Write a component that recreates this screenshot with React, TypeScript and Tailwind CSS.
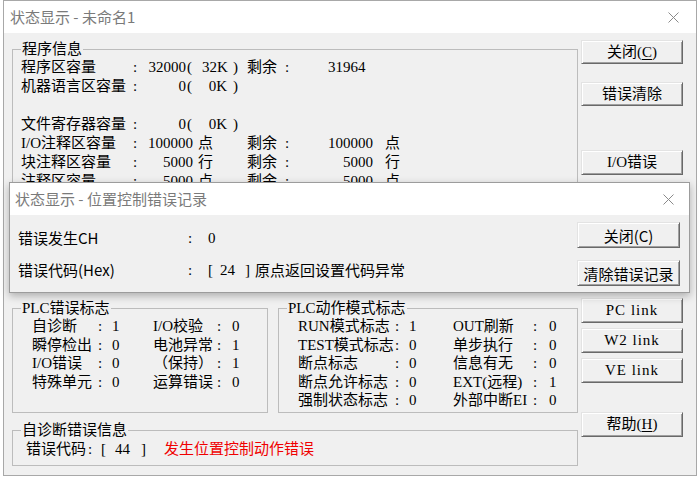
import React from "react"

const serif = "font-['Liberation_Serif','Noto_Sans_CJK_SC',serif]"
const sans = "font-['Noto_Sans_CJK_SC','Liberation_Sans',sans-serif]"

function CloseX() {
  return (
    <svg width="11" height="11" viewBox="0 0 11 11">
      <path d="M0.5 0.5 L10.5 10.5 M10.5 0.5 L0.5 10.5" stroke="#8a8a8a" strokeWidth="1" />
    </svg>
  )
}

function Btn({ children, className = "" }: { children: React.ReactNode; className?: string }) {
  return (
    <div
      className={
        "flex items-center justify-center bg-[#f0f0f0] border border-t-[#e3e3e3] border-l-[#e3e3e3] border-r-[#696969] border-b-[#696969] shadow-[inset_1px_1px_0_#ffffff,inset_-1px_-1px_0_#a0a0a0] text-[15px] leading-none text-black " +
        className
      }
    >
      {children}
    </div>
  )
}

// group box: legend sits on the border, content padded inside
function Group({ title, className = "", inner = "", children }: { title: string; className?: string; inner?: string; children?: React.ReactNode }) {
  return (
    <fieldset className={"border border-[#bcbcbc] min-w-0 " + className}>
      <legend className="ml-[8px] px-[1px] leading-[18px]">{title}</legend>
      <div className={inner}>{children}</div>
    </fieldset>
  )
}

function CapRow({ label, num, k }: { label: string; num: string; k: string }) {
  return (
    <div className="flex h-[19px] items-center whitespace-nowrap">
      <span className="w-[112px]">{label}</span>
      <span className="w-[15px]">:</span>
      <span className="w-[38px] text-right">{num}</span>
      <span className="w-[16px] pl-[1px]">(</span>
      <span className="w-[25px] text-right">{k}</span>
      <span className="w-[20px] pl-[6px]">)</span>
    </div>
  )
}

function CommentRow({ label, num, unit, rest }: { label: string; num: string; unit: string; rest: string }) {
  return (
    <div className="flex h-[19px] items-center whitespace-nowrap">
      <span className="w-[112px]">{label}</span>
      <span className="w-[15px]">:</span>
      <span className="w-[45px] text-right">{num}</span>
      <span className="w-[54px] pl-[5px]">{unit}</span>
      <span className="w-[36px]">剩余</span>
      <span className="w-[37px] pl-[2px]">:</span>
      <span className="w-[53px] text-right">{rest}</span>
      <span className="pl-[12px]">{unit}</span>
    </div>
  )
}

const errFlags: [string, string, string, string][] = [
  ["自诊断", "1", "I/O校验", "0"],
  ["瞬停检出", "0", "电池异常", "1"],
  ["I/O错误", "0", "（保持）", "1"],
  ["特殊单元", "0", "运算错误", "0"],
]

const modeFlags: [string, string, string, string][] = [
  ["RUN模式标志", "1", "OUT刷新", "0"],
  ["TEST模式标志", "0", "单步执行", "0"],
  ["断点标志", "0", "信息有无", "0"],
  ["断点允许标志", "0", "EXT(远程)", "1"],
  ["强制状态标志", "0", "外部中断EI", "0"],
]

export default function App() {
  return (
    <div className="relative w-[700px] h-[478px] bg-white overflow-hidden">
      {/* main window */}
      <div className={"ml-[3px] w-[694px] h-[476px] border border-[#a8a8a8] bg-[#f0f0f0] flex flex-col text-[15px] text-black " + serif}>
        <div className="h-[32px] shrink-0 bg-white flex items-center justify-between">
          <span className={"pl-[6px] text-[15px] text-[#7a7a7a] " + sans}>状态显示 - 未命名1</span>
          <div className="w-[46px] h-full flex items-center justify-center">
            <CloseX />
          </div>
        </div>

        <div className="flex flex-1 pl-[8px] pt-[7px]">
          {/* left column */}
          <div className="w-[566px] flex flex-col">
            <Group title="程序信息" className="h-[250px]" inner="pl-[8px]">
              <div className="flex h-[19px] items-center whitespace-nowrap">
                <span className="w-[112px]">程序区容量</span>
                <span className="w-[15px]">:</span>
                <span className="w-[38px] text-right">32000</span>
                <span className="w-[16px] pl-[1px]">(</span>
                <span className="w-[25px] text-right">32K</span>
                <span className="w-[20px] pl-[6px]">)</span>
                <span className="w-[36px]">剩余</span>
                <span className="w-[45px] pl-[2px]">:</span>
                <span>31964</span>
              </div>
              <CapRow label="机器语言区容量" num="0" k="0K" />
              <div className="h-[19px]" />
              <CapRow label="文件寄存器容量" num="0" k="0K" />
              <CommentRow label="I/O注释区容量" num="100000" unit="点" rest="100000" />
              <CommentRow label="块注释区容量" num="5000" unit="行" rest="5000" />
              <CommentRow label="注释区容量" num="5000" unit="点" rest="5000" />
            </Group>

            <div className="flex mt-[9px] gap-[10px]">
              <Group title="PLC错误标志" className="w-[256px] h-[114px]" inner="pl-[19px]">
                {errFlags.map(([a, av, b, bv]) => (
                  <div key={a} className="flex h-[18.5px] items-center whitespace-nowrap">
                    <span className="w-[60px]">{a}</span>
                    <span className="w-[16px] text-center">:</span>
                    <span className="w-[45px] pl-[4px]">{av}</span>
                    <span className="w-[60px]">{b}</span>
                    <span className="w-[12px] text-center">:</span>
                    <span className="pl-[7px]">{bv}</span>
                  </div>
                ))}
              </Group>
              <Group title="PLC动作模式标志" className="w-[300px] h-[114px]" inner="pl-[19px]">
                {modeFlags.map(([a, av, b, bv]) => (
                  <div key={a} className="flex h-[18.5px] items-center whitespace-nowrap">
                    <span className="w-[92px]">{a}</span>
                    <span className="w-[14px] text-center">:</span>
                    <span className="w-[49px] pl-[5px]">{av}</span>
                    <span className="w-[75px]">{b}</span>
                    <span className="w-[14px] text-center">:</span>
                    <span className="pl-[7px]">{bv}</span>
                  </div>
                ))}
              </Group>
            </div>

            <Group title="自诊断错误信息" className="mt-[8px] h-[45px]" inner="pl-[13px]">
              <div className="flex h-[20px] items-center whitespace-nowrap">
                <span className="w-[62px]">错误代码</span>
                <span className="w-[13px]">:</span>
                <span className="w-[14px]">[</span>
                <span className="w-[26px]">44</span>
                <span className="w-[23px]">]</span>
                <span className="text-[#f00000]">发生位置控制动作错误</span>
              </div>
            </Group>
          </div>

          {/* right buttons */}
          <div className="ml-[3px] w-[102px] flex flex-col">
            <Btn className="mt-0 h-[24px]">
              关闭(<u className="underline-offset-2">C</u>)
            </Btn>
            <Btn className="mt-[18px] h-[24px]">错误清除</Btn>
            <Btn className="mt-[44px] h-[25px]">I/O错误</Btn>
            <div className="h-[123px]" />
            <Btn className="h-[25px] tracking-[1px]">PC link</Btn>
            <Btn className="mt-[5px] h-[25px] tracking-[1px]">W2 link</Btn>
            <Btn className="mt-[5px] h-[25px] tracking-[1px]">VE link</Btn>
            <Btn className="mt-[29px] h-[25px]">
              帮助(<u className="underline-offset-2">H</u>)
            </Btn>
          </div>
        </div>
      </div>

      {/* overlaid dialog */}
      <div className="absolute left-[9px] top-[182px] w-[681px] h-[111px] border border-[#9c9c9c] bg-[#f0f0f0] flex flex-col shadow-[0_3px_8px_rgba(0,0,0,0.28)] text-[15px] text-black">
        <div className="h-[32px] shrink-0 bg-white flex items-center justify-between">
          <span className={"pl-[5px] text-[15px] text-[#7a7a7a] " + sans}>状态显示 - 位置控制错误记录</span>
          <div className="w-[42px] h-full flex items-center justify-center">
            <CloseX />
          </div>
        </div>
        <div className="flex flex-1">
          <div className="flex-1 pl-[8px] pt-[13px]">
            <div className="flex h-[20px] items-center whitespace-nowrap">
              <span className={"w-[168px] " + sans}>错误发生CH</span>
              <span className={"w-[22px] pl-[2px] " + serif}>:</span>
              <span className={serif}>0</span>
            </div>
            <div className="flex mt-[12px] h-[20px] items-center whitespace-nowrap">
              <span className={"w-[168px] " + sans}>错误代码(Hex)</span>
              <span className={"w-[22px] pl-[2px] " + serif}>:</span>
              <span className={"w-[12px] " + serif}>[</span>
              <span className={"w-[25px] " + serif}>24</span>
              <span className={"w-[10px] " + serif}>]</span>
              <span className={sans}>原点返回设置代码异常</span>
            </div>
          </div>
          <div className="w-[103px] mr-[9px] flex flex-col">
            <Btn className={"mt-[7px] h-[26px] " + sans}>关闭(C)</Btn>
            <Btn className={"mt-[12px] h-[26px] " + sans}>清除错误记录</Btn>
          </div>
        </div>
      </div>
    </div>
  )
}
